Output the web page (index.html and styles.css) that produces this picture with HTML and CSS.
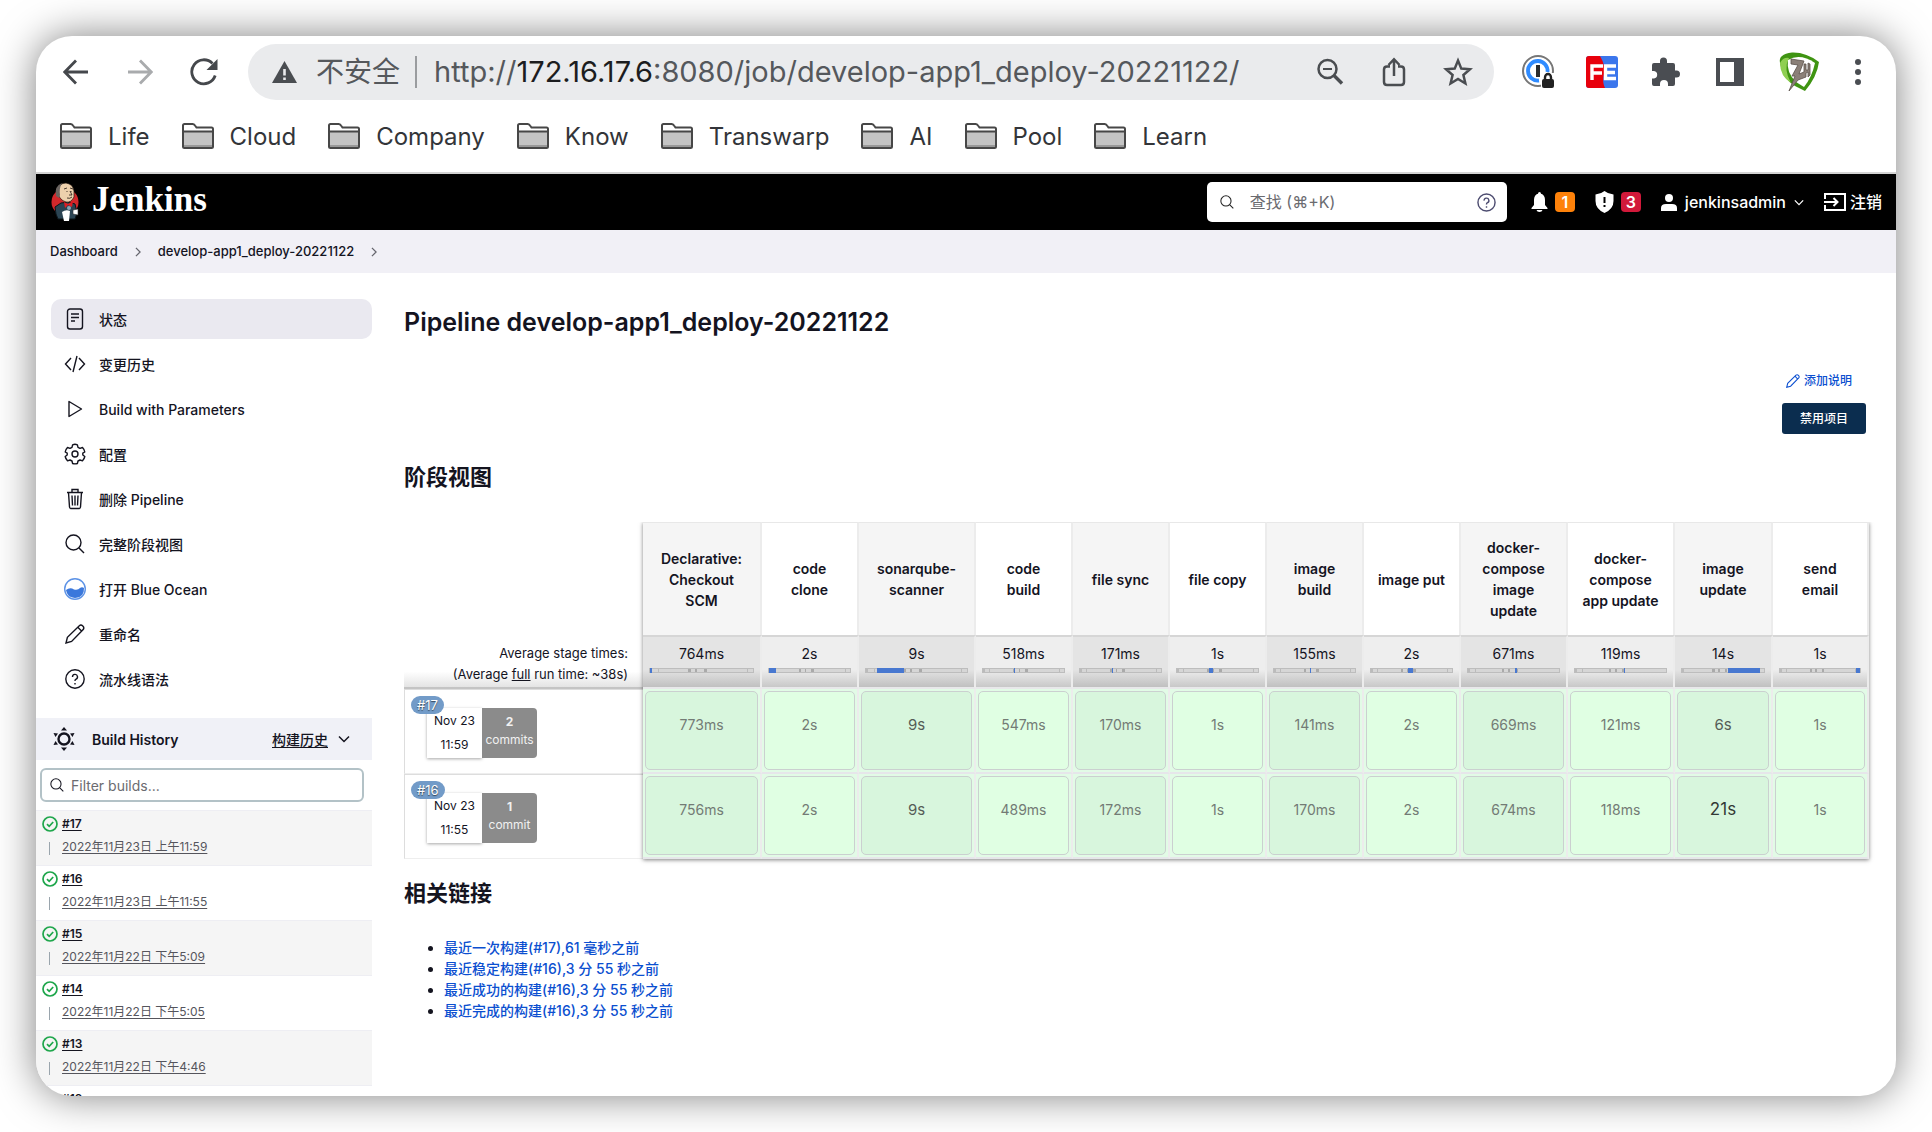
FILE: index.html
```html
<!DOCTYPE html>
<html lang="zh-CN">
<head>
<meta charset="utf-8">
<title>develop-app1_deploy-20221122 [Jenkins]</title>
<link rel="stylesheet" href="styles.css">
</head>
<body>
<svg class="sprite" aria-hidden="true">
  <symbol id="folder" viewBox="0 0 32 26"><path d="M1 23.500V2.500Q1 1 2.500 1H10.500Q12 1 13 2.500L14.500 4.500H29.500Q31 4.500 31 6V23.500Q31 25 29.500 25H2.500Q1 25 1 23.500Z" fill="#fff"/><path d="M1 9H31V25H1Z" fill="#c4c4c4"/><path d="M1 22H31V25H1Z" fill="#999"/><path d="M1 23.500V2.500Q1 1 2.500 1H10.500Q12 1 13 2.500L14.500 4.500H29.500Q31 4.500 31 6V23.500Q31 25 29.500 25H2.500Q1 25 1 23.500ZM1 8.500H31" fill="none" stroke="#474747" stroke-width="2"/></symbol>
  <symbol id="search" viewBox="0 0 20 20"><circle cx="8.500" cy="8.500" r="7.300"/><path d="M14 14L19 19"/></symbol>
  <symbol id="pencil" viewBox="0 0 20 20"><path d="M1 19L2.400 13.300L14.300 1.700Q16 .3 17.800 2Q19.600 3.800 18.200 5.600L6.600 17.400ZM12.800 3.200L16.800 7.200"/></symbol>
  <symbol id="help" viewBox="0 0 20 20"><circle cx="10" cy="10" r="9"/><path d="M7.500 8A2.500 2.500 0 1 1 10.700 10.300Q10 10.600 10 12M10 14V15.400"/></symbol>
  <symbol id="chev-right" viewBox="0 0 8 12"><path d="M1.500 1L6.500 6L1.500 11"/></symbol>
  <symbol id="chev-down" viewBox="0 0 12 8"><path d="M1 1.500L6 6.500L11 1.500"/></symbol>
  <symbol id="success" viewBox="0 0 16 16"><circle cx="8" cy="8" r="7"/><path d="M5 8.200L7.200 10.300L11.200 6"/></symbol>
</svg>

<div class="window">
  <header class="toolbar">
    <div class="nav-buttons">
      <button aria-label="Back"><svg width="26" height="26" viewBox="0 0 26 26" fill="none" stroke="#45484c" stroke-width="2.800"><path d="M25 13H2M13 1.500L1.800 13L13 24.500"/></svg></button>
      <button aria-label="Forward"><svg width="26" height="26" viewBox="0 0 26 26" fill="none" stroke="#a9abad" stroke-width="2.800"><path d="M1 13H24M13 1.500L24.200 13L13 24.500"/></svg></button>
      <button aria-label="Reload"><svg width="28" height="28" viewBox="0 0 28 28"><path d="M25.200 17.500A12 12 0 1 1 22.500 5.500" fill="none" stroke="#45484c" stroke-width="2.800"/><path d="M27.500 1V12H16.500Z" fill="#45484c"/></svg></button>
    </div>
    <div class="address">
      <svg width="25" height="22" viewBox="0 0 25 22"><path d="M12.500 0L25 22H0Z" fill="#4a4d51"/><path d="M11.200 8H13.800V14.500H11.200ZM11.200 16.500H13.800V19H11.200Z" fill="#eaebed"/></svg>
      <span class="insecure">不安全</span>
      <span class="url">http://<b>172.16.17.6</b>:8080/job/develop-app1_deploy-20221122/</span>
      <div class="icon-row">
        <button aria-label="Zoom"><svg width="28" height="28" viewBox="0 0 28 28" fill="none" stroke="#4a4d51"><circle cx="11.500" cy="11" r="9" stroke-width="2.500"/><path d="M18 17.500L26 25.500" stroke-width="3.400"/><path d="M7 11H16" stroke-width="2.200"/></svg></button>
        <button aria-label="Share"><svg width="24" height="30" viewBox="0 0 24 30" fill="none" stroke="#4a4d51" stroke-width="2.500"><path d="M8 9.500H5Q2 9.500 2 12.500V25Q2 28 5 28H19Q22 28 22 25V12.500Q22 9.500 19 9.500H16M12 19V3M6.500 8L12 2.200L17.500 8"/></svg></button>
        <button aria-label="Bookmark"><svg width="30" height="30" viewBox="0 0 30 30" fill="none" stroke="#4a4d51" stroke-width="2.500"><path d="M15 3.500L18.300 11.600L27 12.300L20.400 18L22.400 26.500L15 22L7.600 26.500L9.600 18L3 12.300L11.700 11.600Z"/></svg></button>
      </div>
    </div>
    <div class="icon-row">
      <button aria-label="Password manager"><svg width="34" height="34" viewBox="0 0 34 34"><circle cx="16" cy="16" r="15" fill="#fff" stroke="#777" stroke-width="2"/><path d="M17 25.500A9.800 9.800 0 1 1 25.500 17" fill="none" stroke="#2f8bff" stroke-width="3.800"/><rect x="14" y="10" width="4" height="12" fill="#2b2d30"/><path d="M19 34V23Q19 18 24 18H34V34Z" fill="#fff"/><path d="M23 25V22.500A3 3.500 0 0 1 29 22.500V25" fill="none" stroke="#222" stroke-width="2.400"/><rect x="20" y="24" width="12" height="9" rx="2" fill="#222"/></svg></button>
      <button aria-label="FeHelper"><svg width="32" height="32" viewBox="0 0 32 32"><rect width="32" height="32" rx="3" fill="#3b76ec"/><path d="M3 0H14Q20 10 18 18Q16 26 19 32H3Q0 32 0 29V3Q0 0 3 0Z" fill="#e8000c"/><path d="M6 24V10H17M6 17H16M30 10H19.500V22.500H30M19.500 16.500H29" fill="none" stroke="#fff" stroke-width="3.400"/></svg></button>
      <button aria-label="Extensions"><svg width="30" height="30" viewBox="0 0 30 30"><path d="M3 6H9V4A3.500 3.500 0 0 1 16 4V6H22Q24 6 24 8V13.500H25.500A3.500 3.500 0 0 1 25.500 20.500H24V27Q24 29 22 29H17V27A4 4 0 0 0 9 27V29H3Q1 29 1 27V21.500H3A3.800 3.800 0 0 0 3 14H1V8Q1 6 3 6Z" fill="#4a4d52"/></svg></button>
      <button aria-label="Side panel"><svg width="28" height="28" viewBox="0 0 28 28"><rect width="28" height="28" fill="#4a4d52"/><rect x="4" y="4" width="14" height="20" fill="#fff"/></svg></button>
      <button aria-label="Profile"><svg width="42" height="42" viewBox="0 0 42 42"><path d="M2 12Q0 3 14 1.500Q28 1 41 11Q39 26 27 40L17 35Q4 27 2 12Z" fill="#3f9412"/><path d="M2 12Q2 25 13 32Q5 18 11 7Q5 6 2 12Z" fill="#8fcf52"/><path d="M10 9Q22 2 37 12Q34 26 26 36L18 31Q8 21 10 9Z" fill="#fff"/><path d="M13 8L26 10L21 23L26 21V13L28 13V19L30 19V12L32 13V24L30 26V21L28 22V26L20 29L11 40L17 25H14L20 14L13 13Z" fill="#8b8078" stroke="#5b5049" stroke-width=".8"/></svg></button>
      <button aria-label="Menu"><svg width="6" height="26" viewBox="0 0 6 26" fill="#4a4d52"><circle cx="3" cy="3" r="3"/><circle cx="3" cy="13" r="3"/><circle cx="3" cy="23" r="3"/></svg></button>
    </div>
  </header>

  <nav class="bookmarks" aria-label="Bookmarks">
    <a href="#"><svg><use href="#folder"/></svg>Life</a>
    <a href="#"><svg><use href="#folder"/></svg>Cloud</a>
    <a href="#"><svg><use href="#folder"/></svg>Company</a>
    <a href="#"><svg><use href="#folder"/></svg>Know</a>
    <a href="#"><svg><use href="#folder"/></svg>Transwarp</a>
    <a href="#"><svg><use href="#folder"/></svg>AI</a>
    <a href="#"><svg><use href="#folder"/></svg>Pool</a>
    <a href="#"><svg><use href="#folder"/></svg>Learn</a>
  </nav>

  <div class="page-header">
    <a class="brand" href="#">
      <svg width="30" height="40" viewBox="0 0 30 40"><circle cx="14" cy="20" r="13.500" fill="#d2282b"/><path d="M4 25L10 21L18 20L24 22L26 31L24 37H7L5 32Z" fill="#2b4453" stroke="#0b1419"/><path d="M6 9Q8 1 15 1Q22 2 23 9L23 15Q20 21 15 20Q8 18 6 9Z" fill="#edd0ac" stroke="#201510" stroke-width=".7"/><path d="M5 14Q3 4 11 1Q8 6 9 13L8 16Z" fill="#6b6460"/><path d="M13 7L16 6M19 6L22 7M16 9V10M20 9V10M19 9L21 13L18 13M16 16Q19 17 21 15" fill="none" stroke="#201510" stroke-width=".8"/><path d="M13 20L17 22L22 19L21 25L17 23L14 26Z" fill="#e21c22"/><circle cx="18" cy="26" r="2" fill="#8aa6b8"/><path d="M11 30Q15 27 19 29L18 39L13 39Z" fill="#fff"/><path d="M22 28L27 27L27 33L22 32Z" fill="#fff" stroke="#333" stroke-width=".6"/></svg>
      <span>Jenkins</span>
    </a>
    <label class="header-search">
      <svg class="line" width="14" height="14"><use href="#search"/></svg>
      <input type="text" placeholder="查找 (⌘+K)" aria-label="查找">
      <svg class="line help" width="19" height="19"><use href="#help"/></svg>
    </label>
    <div class="header-tools">
      <a href="#" aria-label="Notifications"><svg width="17" height="20" viewBox="0 0 17 20" fill="#fff"><path d="M8.500 0Q10 0 10 1.800Q14 3 14 8V13L16.500 16V17H.5V16L3 13V8Q3 3 7 1.800Q7 0 8.500 0ZM5.500 18H11.500Q11 20 8.500 20Q6 20 5.500 18Z"/></svg><b class="badge warn">1</b></a>
      <a href="#" aria-label="Security"><svg width="19" height="22" viewBox="0 0 19 22"><path d="M9.500 0Q13 3 18.500 3.500V10Q18.500 18 9.500 22Q.5 18 .5 10V3.500Q6 3 9.500 0Z" fill="#fff"/><path d="M9.500 6V12M9.500 14V16" stroke="#000" stroke-width="2"/></svg><b class="badge danger">3</b></a>
      <a href="#" class="user"><svg width="16" height="17" viewBox="0 0 16 17" fill="#fff"><circle cx="8" cy="4" r="4"/><path d="M0 17V14Q0 10 5 10H11Q16 10 16 14V17Z"/></svg>jenkinsadmin<svg class="line" width="10" height="7"><use href="#chev-down"/></svg></a>
      <a href="#" class="logout"><svg width="22" height="18" viewBox="0 0 22 18" fill="none" stroke="#fff" stroke-width="2"><path d="M1 6V1H21V17H1V12M0 9H13M9.500 5L13.500 9L9.500 13"/></svg>注销</a>
    </div>
  </div>

  <nav class="breadcrumb" aria-label="Breadcrumb">
    <a href="#">Dashboard</a>
    <svg class="line"><use href="#chev-right"/></svg>
    <a href="#">develop-app1_deploy-20221122</a>
    <svg class="line"><use href="#chev-right"/></svg>
  </nav>

  <div class="body">
    <aside class="side">
      <nav class="tasks" aria-label="Tasks">
        <a href="#" class="active"><svg viewBox="0 0 22 22"><rect x="3.500" y="1" width="15" height="20" rx="2.500"/><path d="M7 6H15M7 9.500H15M7 13H11"/></svg>状态</a>
        <a href="#"><svg viewBox="0 0 22 22"><path d="M7 5L1.500 11L7 17M15 5L20.500 11L15 17M13 3L9 19"/></svg>变更历史</a>
        <a href="#"><svg viewBox="0 0 22 22"><path d="M5 3.500L17.500 11L5 18.500Z" stroke-linejoin="round"/></svg>Build with Parameters</a>
        <a href="#"><svg viewBox="0 0 22 22"><circle cx="11" cy="11" r="3"/><path d="M8.600 1.800Q11 .8 13.400 1.800L14 4.300L16 5.400L18.500 4.500Q20.500 6.500 20.800 9L18.800 10.200V12L20.800 13.500Q20.300 16 18.500 17.800L16 17L14 18L13.400 20.500Q11 21.300 8.600 20.500L8 18L6 17L3.500 17.800Q1.700 16 1.200 13.500L3.200 12V10.200L1.200 9Q1.500 6.500 3.500 4.500L6 5.400L8 4.300Z" stroke-linejoin="round"/></svg>配置</a>
        <a href="#"><svg viewBox="0 0 22 22"><path d="M3 4.500H19M8 4.500V1.500H14V4.500M4.500 4.500L5.500 19Q5.600 20.500 7 20.500H15Q16.400 20.500 16.500 19L17.500 4.500M8 7.500L8.500 17.500M11 7.500V17.500M14 7.500L13.500 17.500"/></svg>删除 Pipeline</a>
        <a href="#"><svg viewBox="-1 -1 22 22"><circle cx="8.500" cy="8.500" r="7.500"/><path d="M14 14L19 19"/></svg>完整阶段视图</a>
        <a href="#"><svg class="ocean" viewBox="0 0 22 22"><circle cx="11" cy="11" r="10.300"/><path d="M2 12Q6 9 10 11.500Q14 12.500 16 10Q18 8.500 20 10Q20.500 19.500 11 20Q3 19.500 2 12Z"/></svg>打开 Blue Ocean</a>
        <a href="#"><svg viewBox="-1 -1 22 22"><path d="M1 19L2.400 13.300L14.300 1.700Q16 .3 17.800 2Q19.600 3.800 18.200 5.600L6.600 17.400ZM12.800 3.200L16.800 7.200"/></svg>重命名</a>
        <a href="#"><svg viewBox="-1 -1 22 22"><circle cx="10" cy="10" r="9.200"/><path d="M7.500 8A2.500 2.500 0 1 1 10.700 10.300Q10 10.600 10 12M10 14V15.400"/></svg>流水线语法</a>
      </nav>

      <section class="history">
        <div class="history-head">
          <svg width="22" height="24" viewBox="0 0 22 24" fill="#14141f"><circle cx="11" cy="12" r="5.500" fill="none" stroke="#14141f" stroke-width="2.400"/><path d="M11 0L14 3.500H8ZM11 24L14 20.500H8ZM.5 6L5 6.500L2.500 10ZM21.500 6L17 6.500L19.500 10ZM.5 18L5 17.500L2.500 14ZM21.500 18L17 17.500L19.500 14Z"/></svg>
          <h2>Build History</h2>
          <a href="#">构建历史</a>
          <svg class="line" width="12" height="8"><use href="#chev-down"/></svg>
        </div>
        <label class="filter"><svg class="line" width="14" height="14"><use href="#search"/></svg><input type="text" placeholder="Filter builds..." aria-label="Filter builds"></label>
        <ol class="builds">
          <li><svg><use href="#success"/></svg><a class="num" href="#">#17</a><i></i><a class="date" href="#">2022年11月23日 上午11:59</a></li>
          <li><svg><use href="#success"/></svg><a class="num" href="#">#16</a><i></i><a class="date" href="#">2022年11月23日 上午11:55</a></li>
          <li><svg><use href="#success"/></svg><a class="num" href="#">#15</a><i></i><a class="date" href="#">2022年11月22日 下午5:09</a></li>
          <li><svg><use href="#success"/></svg><a class="num" href="#">#14</a><i></i><a class="date" href="#">2022年11月22日 下午5:05</a></li>
          <li><svg><use href="#success"/></svg><a class="num" href="#">#13</a><i></i><a class="date" href="#">2022年11月22日 下午4:46</a></li>
          <li><svg><use href="#success"/></svg><a class="num" href="#">#12</a></li>
        </ol>
      </section>
    </aside>

    <main class="main">
      <h1>Pipeline develop-app1_deploy-20221122</h1>
      <div class="actions">
        <a href="#"><svg class="line" width="14" height="14"><use href="#pencil"/></svg>添加说明</a>
        <button>禁用项目</button>
      </div>

      <h2>阶段视图</h2>
      <div class="stage-view">
        <table>
          <colgroup><col class="c-label"><col class="c-first"><col class="c-s"><col class="c-xl"><col class="c-s"><col class="c-s"><col class="c-s"><col class="c-s"><col class="c-s"><col class="c-l"><col class="c-l"><col class="c-m"><col class="c-last"></colgroup>
          <thead>
            <tr class="stages"><td></td><th>Declarative: Checkout SCM</th><th>code clone</th><th>sonarqube-scanner</th><th>code build</th><th>file sync</th><th>file copy</th><th>image build</th><th>image put</th><th>docker-compose image update</th><th>docker-compose app update</th><th>image update</th><th>send email</th></tr>
            <tr class="averages">
              <th>Average stage times:<br>(Average <u>full</u> run time: ~38s)</th>
              <td>764ms<div class="bar"><span style="left:0%;width:2%"></span></div></td>
              <td>2s<div class="bar"><span style="left:0%;width:9%"></span></div></td>
              <td>9s<div class="bar"><span style="left:11%;width:27%"></span></div></td>
              <td>518ms<div class="bar"><span style="left:38%;width:1%"></span></div></td>
              <td>171ms<div class="bar"><span style="left:39%;width:1%"></span></div></td>
              <td>1s<div class="bar"><span style="left:40%;width:5%"></span></div></td>
              <td>155ms<div class="bar"><span style="left:45%;width:1%"></span></div></td>
              <td>2s<div class="bar"><span style="left:46%;width:6%"></span></div></td>
              <td>671ms<div class="bar"><span style="left:52%;width:2%"></span></div></td>
              <td>119ms<div class="bar"><span style="left:54%;width:1%"></span></div></td>
              <td>14s<div class="bar"><span style="left:56%;width:39%"></span></div></td>
              <td>1s<div class="bar"><span style="left:95%;width:5%"></span></div></td>
            </tr>
          </thead>
          <tbody>
            <tr>
              <th><div class="run"><span class="run-id">#17</span><span class="when">Nov 23<br>11:59</span><span class="commits"><b>2</b>commits</span></div></th>
              <td><div>773ms</div></td><td><div>2s</div></td><td><div class="slow">9s</div></td><td><div>547ms</div></td><td><div>170ms</div></td><td><div>1s</div></td><td><div>141ms</div></td><td><div>2s</div></td><td><div>669ms</div></td><td><div>121ms</div></td><td><div class="slow">6s</div></td><td><div>1s</div></td>
            </tr>
            <tr>
              <th><div class="run"><span class="run-id">#16</span><span class="when">Nov 23<br>11:55</span><span class="commits"><b>1</b>commit</span></div></th>
              <td><div>756ms</div></td><td><div>2s</div></td><td><div class="slow">9s</div></td><td><div>489ms</div></td><td><div>172ms</div></td><td><div>1s</div></td><td><div>170ms</div></td><td><div>2s</div></td><td><div>674ms</div></td><td><div>118ms</div></td><td><div class="slowest">21s</div></td><td><div>1s</div></td>
            </tr>
          </tbody>
        </table>
      </div>

      <h2 class="links-title">相关链接</h2>
      <ul class="permalinks">
        <li><a href="#">最近一次构建(#17),61 毫秒之前</a></li>
        <li><a href="#">最近稳定构建(#16),3 分 55 秒之前</a></li>
        <li><a href="#">最近成功的构建(#16),3 分 55 秒之前</a></li>
        <li><a href="#">最近完成的构建(#16),3 分 55 秒之前</a></li>
      </ul>
    </main>
  </div>
</div>
</body>
</html>
```
FILE: styles.css
```css
* { box-sizing: border-box; }

body {
  margin: 0;
  height: 100vh;
  padding: 36px;
  overflow: hidden;
  background: #fff;
  color: #14141f;
  font: 14px/21px Inter, "Noto Sans CJK SC", sans-serif;
}

a { color: inherit; text-decoration: none; }
button { border: 0; padding: 0; background: none; font: inherit; }
h1, h2, ul, ol { margin: 0; padding: 0; }
input { border: 0; padding: 0; min-width: 0; background: none; font: inherit; outline: 0; }
input::placeholder { color: #6b6b70; opacity: 1; }
svg { display: block; flex: none; }
.sprite { display: none; }
.line { fill: none; stroke: currentColor; stroke-width: 1.500; }

.window {
  height: 100%;
  overflow: hidden;
  border-radius: 36px;
  background: #fff;
  box-shadow: 0 0 40px rgba(0, 0, 0, .5);
  display: flex;
  flex-direction: column;
}

/* Browser toolbar */
.toolbar {
  flex: none;
  display: flex;
  align-items: center;
  gap: 28px;
  padding: 8px 22px 8px 24px;
}
.nav-buttons, .icon-row { display: flex; gap: 32px; }
.toolbar button { width: 32px; height: 42px; display: grid; place-items: center; }
.address {
  flex: 1;
  min-width: 0;
  height: 56px;
  display: flex;
  align-items: center;
  padding: 0 20px 0 24px;
  border-radius: 28px;
  background: #eaebed;
  color: #55585c;
  font-size: 29px;
  line-height: 40px;
}
.insecure { margin-left: 19px; padding-right: 15px; border-right: 2px solid #9a9c9f; line-height: 32px; font-size: 28px; }
.url { flex: 1; min-width: 0; margin-left: 17px; white-space: nowrap; }
.url b { color: #1c1d20; font-weight: 400; }

.bookmarks {
  flex: none;
  height: 66px;
  display: flex;
  align-items: center;
  gap: 32px;
  padding: 0 24px 8px;
  border-bottom: 2px solid #d3d3d3;
  color: #333539;
  font-size: 24px;
}
.bookmarks a { display: flex; align-items: center; gap: 16px; }
.bookmarks svg { width: 32px; height: 26px; }

/* Jenkins header */
.page-header {
  flex: none;
  height: 56px;
  display: flex;
  align-items: center;
  padding: 0 14px 0 15px;
  background: #000;
  color: #fff;
}
.brand { display: flex; align-items: center; gap: 11px; margin-right: auto; font: bold 35px/36px "Liberation Serif", serif; }
.brand span { padding-bottom: 4px; }
.header-search {
  width: 300px;
  height: 40px;
  display: flex;
  align-items: center;
  padding: 0 11px 0 13px;
  border-radius: 5px;
  background: #fff;
  color: #222;
  font-size: 16px;
}
.header-search input { flex: 1; margin-left: 16px; }
.header-search .help { color: #4d4c70; }
.header-tools { display: flex; align-items: center; margin-left: 24px; gap: 20px; font-size: 16px; font-weight: 500; }
.header-tools a { display: flex; align-items: center; gap: 7px; }
.header-tools .user { gap: 8px; }
.header-tools .logout { gap: 4px; }
.badge { width: 20px; border-radius: 4px; text-align: center; line-height: 20px; font-weight: 600; }
.warn { background: #fe820a; }
.danger { background: #d1193a; }

.breadcrumb {
  flex: none;
  height: 43px;
  display: flex;
  align-items: center;
  gap: 16px;
  padding: 0 14px;
  background: #f1f0f6;
  font-size: 13px;
  font-weight: 500;
}
.breadcrumb svg { width: 8px; height: 10px; color: #66666e; }

.body { flex: 1; min-height: 0; display: flex; }

/* Side panel */
.side { flex: none; width: 336px; }
.tasks { display: grid; gap: 5px; padding: 26px 0 19px 15px; }
.tasks a {
  height: 40px;
  display: flex;
  align-items: center;
  gap: 13px;
  padding-left: 13px;
  border-radius: 10px;
  font-weight: 500;
}
.tasks .active { background: #eae9f0; }
.tasks svg { width: 22px; height: 22px; fill: none; stroke: #14141f; stroke-width: 1.400; }
.tasks .ocean { stroke: none; fill: #3b78dc; }
.ocean circle { fill: #fff; stroke: #5d93e6; }

.history-head {
  height: 42px;
  display: flex;
  align-items: center;
  padding: 0 22px 0 17px;
  background: #f0f1f7;
}
.history-head h2 { flex: 1; margin-left: 17px; font-size: 14px; font-weight: 600; }
.history-head a { margin-right: 10px; font-weight: 500; text-decoration: underline; text-underline-offset: 2px; }
.filter {
  height: 34px;
  display: flex;
  align-items: center;
  gap: 7px;
  margin: 8px 8px 8px 4px;
  padding: 0 8px;
  border: 2px solid #b3c2c7;
  border-radius: 6px;
}
.filter input { flex: 1; }
.builds { list-style: none; }
.builds li {
  height: 55px;
  display: grid;
  grid-template-columns: 16px 1fr;
  grid-template-rows: 17px 17px;
  gap: 6px 4px;
  padding: 5px 6px;
  border-top: 1px solid #eeeef3;
  font-size: 12px;
  line-height: 16px;
}
.builds li:nth-child(odd) { background: #f5f5f5; }
.builds svg { width: 16px; height: 16px; fill: none; stroke: #1ea64b; stroke-width: 1.700; }
.builds a { justify-self: start; text-decoration: underline; text-underline-offset: 2px; }
.builds .num { font-weight: 600; }
.builds .date { color: #55555c; }
.builds i { width: 1px; height: 13px; margin: 3px 0 0 7px; background: #9aa5ad; }

/* Main panel */
.main { flex: 1; min-width: 0; padding: 34px 27px 0 32px; }
h1 { font-size: 25px; line-height: 30px; font-weight: 600; }
.main h2 { font-size: 22px; line-height: 28px; font-weight: 600; }
.actions { display: flex; flex-direction: column; align-items: flex-end; gap: 12px; padding: 34px 3px 29px 0; font-size: 12px; font-weight: 500; }
.actions a { display: flex; align-items: center; gap: 4px; margin-right: 14px; color: #0b4fd0; line-height: 20px; }
.actions button { width: 84px; height: 31px; border-radius: 3px; background: #0b2d4f; color: #fff; }

.stage-view { position: relative; margin-top: 31px; }
/* Drop shadow round the stage columns only; the label column stays flat. */
.stage-view::after {
  content: "";
  position: absolute;
  inset: 0 0 0 239px;
  box-shadow: 0 1px 4px rgba(0, 0, 0, .5);
  clip-path: inset(0 -8px -8px -8px);
  pointer-events: none;
}
table { width: 100%; table-layout: fixed; border-collapse: separate; border-spacing: 0; }
.c-label { width: 239px; }
.c-first { width: 119px; }
.c-xl { width: 117px; }
.c-l { width: 107px; }
.c-m { width: 98px; }
.c-s { width: 97px; }
.c-last { width: 96px; }
th, td { padding: 0; text-align: center; font-weight: 400; }
td + td, th + td, td + th, th + th { border-right: 2px solid #ececec; }

.stages th { height: 113px; padding: 0 13px; border-top: 1px solid #e8e8e8; font-weight: 600; }
.stages th:nth-child(even) { background: #f5f5f5; }
.averages { height: 54px; vertical-align: top; }
.averages th {
  padding: 8px 15px 0 0;
  border-bottom: 2px solid #c4c4c4;
  text-align: right;
  background: linear-gradient(#fff 70%, #e4e4e4);
  font-size: 13px;
  white-space: nowrap;
}
.averages td {
  padding: 6px 6px 0;
  border-top: 2px solid #d6d6d6;
  border-bottom: 2px solid #e8e8ea;
  background: linear-gradient(#eee 65%, #c8c8c8);
}
.averages td:nth-child(even) { background: linear-gradient(#e4e4e4 65%, #c0c0c0); }
.bar {
  position: relative;
  height: 5px;
  margin-top: 4px;
  border: 1px solid #bdbdbd;
  background: linear-gradient(90deg, #bbb 2%, #d6d6d6 2% 8%, #bbb 8% 9%, #d6d6d6 9% 37%, #aaa 37% 40%, #d6d6d6 40% 44%, #aaa 44% 46%, #d6d6d6 46% 52%, #aaa 52% 55%, #d6d6d6 55% 94%, #bbb 94% 95%, #d6d6d6 95%);
}
.bar span { position: absolute; top: -1px; height: 5px; min-width: 1px; background: #4878d0; }

tbody tr { height: 85px; vertical-align: top; }
tbody th { border: 1px solid #ddd; border-right: 0; border-bottom-color: #eee; }
tbody td { padding: 2px; border-bottom: 2px solid #e6e6ea; background: #e2fbe6; }
tbody td div { height: 79px; padding-top: 22px; border: 1px solid #cbd0d0; border-radius: 5px; background: #e0ffe3; color: #737b75; }
tbody td:nth-child(even) div { background: #d8f6dd; }
tbody td .slow { color: #555c57; font-size: 15px; }
tbody td .slowest { color: #333935; font-size: 17px; }

.run { position: relative; display: flex; margin: 18px 0 0 22px; font-size: 12px; line-height: 24px; }
.run-id { position: absolute; left: -16px; top: -12px; padding: 0 6px; border-radius: 9px; background: #729bc8; color: #fff; font-size: 13px; line-height: 18px; text-shadow: 0 1px 1px #345; }
.when { width: 55px; height: 50px; padding-top: 1px; background: #fff; box-shadow: 0 1px 3px rgba(0, 0, 0, .35); }
.commits { width: 55px; height: 50px; padding-top: 5px; border-radius: 0 4px 4px 0; background: #8b8b8b; color: #f1f1f1; line-height: 18px; }
.commits b { display: block; }

.main .links-title { margin-top: 20px; }
.permalinks { margin-top: 30px; padding-left: 40px; color: #14141f; }
.permalinks a { color: #0b4fd0; font-weight: 500; }
```
